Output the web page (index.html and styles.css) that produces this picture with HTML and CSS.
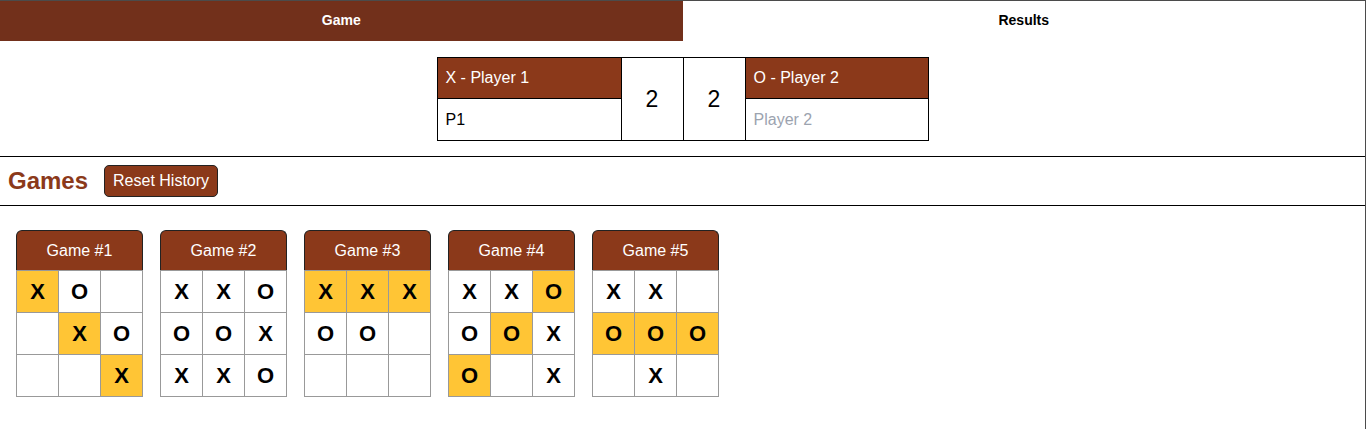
FILE: index.html
```html
<!DOCTYPE html>
<html lang="en">
<head>
<meta charset="utf-8">
<title>Tic Tac Toe - Results</title>
<link rel="stylesheet" href="styles.css">
</head>
<body>
<div class="app">
  <nav class="tabs">
    <div class="tab active">Game</div>
    <div class="tab">Results</div>
  </nav>

  <section class="score">
    <div class="score-grid">
      <div class="cell head c1">X - Player 1</div>
      <div class="cell num c2">2</div>
      <div class="cell num c3">2</div>
      <div class="cell head c4">O - Player 2</div>
      <div class="cell name c1">P1</div>
      <div class="cell name placeholder c4">Player 2</div>
    </div>
  </section>

  <header class="games-bar">
    <h2 class="games-title">Games</h2>
    <button class="reset-btn">Reset History</button>
  </header>

  <section class="cards">
    <div class="card">
      <div class="card-head">Game #1</div>
      <div class="board">
        <div class="sq win">X</div><div class="sq">O</div><div class="sq"></div>
        <div class="sq"></div><div class="sq win">X</div><div class="sq">O</div>
        <div class="sq"></div><div class="sq"></div><div class="sq win">X</div>
      </div>
    </div>
    <div class="card">
      <div class="card-head">Game #2</div>
      <div class="board">
        <div class="sq">X</div><div class="sq">X</div><div class="sq">O</div>
        <div class="sq">O</div><div class="sq">O</div><div class="sq">X</div>
        <div class="sq">X</div><div class="sq">X</div><div class="sq">O</div>
      </div>
    </div>
    <div class="card">
      <div class="card-head">Game #3</div>
      <div class="board">
        <div class="sq win">X</div><div class="sq win">X</div><div class="sq win">X</div>
        <div class="sq">O</div><div class="sq">O</div><div class="sq"></div>
        <div class="sq"></div><div class="sq"></div><div class="sq"></div>
      </div>
    </div>
    <div class="card">
      <div class="card-head">Game #4</div>
      <div class="board">
        <div class="sq">X</div><div class="sq">X</div><div class="sq win">O</div>
        <div class="sq">O</div><div class="sq win">O</div><div class="sq">X</div>
        <div class="sq win">O</div><div class="sq"></div><div class="sq">X</div>
      </div>
    </div>
    <div class="card">
      <div class="card-head">Game #5</div>
      <div class="board">
        <div class="sq">X</div><div class="sq">X</div><div class="sq"></div>
        <div class="sq win">O</div><div class="sq win">O</div><div class="sq win">O</div>
        <div class="sq"></div><div class="sq">X</div><div class="sq"></div>
      </div>
    </div>
  </section>
</div>
</body>
</html>
```

FILE: styles.css
```css
* { box-sizing: border-box; }

html, body {
  margin: 0;
  padding: 0;
  background: #fff;
}

body {
  font-family: "Liberation Sans", Arial, Helvetica, sans-serif;
  color: #000;
}

.app {
  min-height: 100vh;
  border-top: 1px solid #4b4b4b;
  border-right: 1px solid #4b4b4b;
}

/* Tabs */
.tabs {
  display: flex;
  height: 40px;
}

.tab {
  flex: 1;
  display: flex;
  align-items: center;
  justify-content: center;
  padding-bottom: 2px;
  font-family: "Liberation Sans", Arial, sans-serif;
  font-weight: bold;
  font-size: 14px;
  color: #000;
  background: #fff;
}

.tab.active {
  background: #72301b;
  color: #fff;
}

/* Score table */
.score {
  display: flex;
  justify-content: center;
  padding: 16px 0 15px;
}

.score-grid {
  display: grid;
  grid-template-columns: 184px 62px 62px 183px;
  grid-template-rows: 41px 42px;
  border-left: 1px solid #000;
  border-top: 1px solid #000;
}

.cell {
  border-right: 1px solid #000;
  border-bottom: 1px solid #000;
  display: flex;
  align-items: center;
  font-size: 16px;
}

.c1 { grid-column: 1; }
.c2 { grid-column: 2; grid-row: 1 / span 2; }
.c3 { grid-column: 3; grid-row: 1 / span 2; }
.c4 { grid-column: 4; }

.head {
  background: #8b391a;
  color: #fff;
  padding: 0 8px;
}

.name {
  padding: 0 8px;
  color: #000;
}

.name.placeholder {
  color: #9ca3af;
}

.num {
  justify-content: center;
  font-size: 23px;
}

/* Games bar */
.games-bar {
  display: flex;
  align-items: center;
  gap: 16px;
  height: 50px;
  padding: 0 8px;
  border-top: 1px solid #000;
  border-bottom: 1px solid #000;
}

.games-title {
  margin: 0;
  font-size: 24px;
  font-weight: bold;
  color: #8b391a;
}

.reset-btn {
  font-family: "Liberation Sans", Arial, sans-serif;
  font-size: 16px;
  color: #fff;
  background: #8b391a;
  border: 1px solid #222;
  border-radius: 5px;
  height: 32px;
  padding: 0 8px;
  cursor: pointer;
}

/* Cards */
.cards {
  display: flex;
  gap: 17px;
  padding: 24px 16px;
}

.card {
  width: 127px;
}

.card-head {
  height: 40px;
  background: #8b391a;
  color: #fff;
  border: 1px solid #222;
  border-bottom: none;
  border-radius: 6px 6px 0 0;
  display: flex;
  align-items: center;
  justify-content: center;
  font-size: 16px;
}

.board {
  display: grid;
  grid-template-columns: repeat(3, 41px);
  grid-auto-rows: 41px;
  gap: 1px;
  padding: 1px;
  background: #999;
}

.sq {
  background: #fff;
  display: flex;
  align-items: center;
  justify-content: center;
  font-size: 22px;
  font-weight: bold;
}

.sq.win {
  background: #ffc535;
}
```
